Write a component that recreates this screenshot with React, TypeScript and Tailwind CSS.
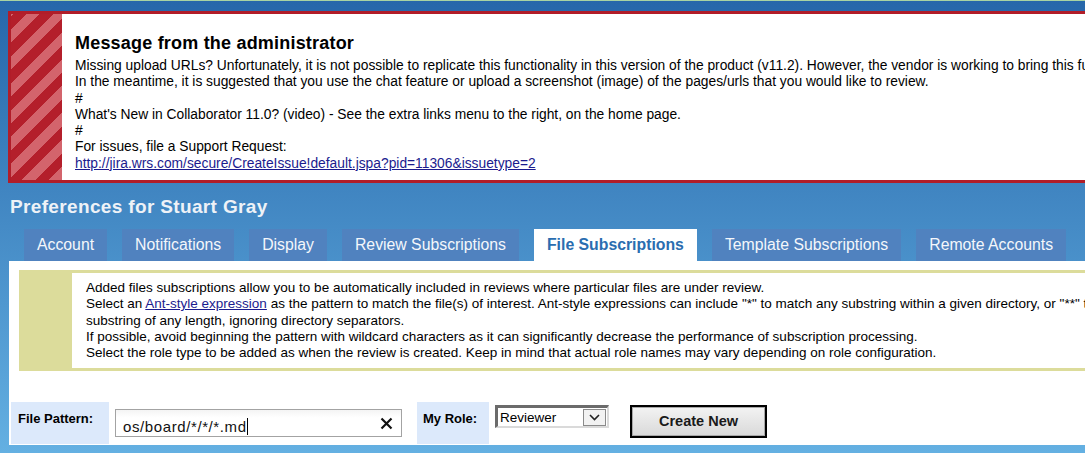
import React from "react";

const tabs = [
  "Account",
  "Notifications",
  "Display",
  "Review Subscriptions",
  "File Subscriptions",
  "Template Subscriptions",
  "Remote Accounts",
];

export default function App() {
  return (
    <div className="w-[1085px] h-[453px] overflow-hidden border-t border-[#a9d3a3] bg-gradient-to-b from-[#2767aa] to-[#64b0e2] font-['Liberation_Sans',Arial,sans-serif] text-black">
      {/* Admin message */}
      <div className="pt-[10px] pl-[8px]">
        <div className="flex h-[172px] w-[1200px] border-[3px] border-[#b11d29] bg-white">
          <div className="w-[51px] shrink-0 bg-[repeating-linear-gradient(-45deg,#d3646c_0px,#d3646c_9.5px,#b41f2b_9.5px,#b41f2b_19px)]" />
          <div className="pl-[13px] pt-[18px] text-[13.8px] leading-[16.3px] whitespace-nowrap">
            <div className="mb-[4px] text-[18px] leading-[22px] font-bold tracking-[0.2px]">
              Message from the administrator
            </div>
            <div>
              Missing upload URLs? Unfortunately, it is not possible to replicate this functionality in this version of the product (v11.2). However, the vendor is working to bring this functionality back in a future release.
            </div>
            <div>
              In the meantime, it is suggested that you use the chat feature or upload a screenshot (image) of the pages/urls that you would like to review.
            </div>
            <div>#</div>
            <div>
              What's New in Collaborator 11.0? (video) - See the extra links menu to the right, on the home page.
            </div>
            <div>#</div>
            <div>For issues, file a Support Request:</div>
            <div>
              <a className="text-[#1b1b8e] underline">
                http://jira.wrs.com/secure/CreateIssue!default.jspa?pid=11306&amp;issuetype=2
              </a>
            </div>
          </div>
        </div>
      </div>

      {/* Page title */}
      <div className="mt-[12px] pl-[10px] text-[19px] leading-[24px] font-bold text-[#eef2f7] tracking-[0.35px]">
        Preferences for Stuart Gray
      </div>

      {/* Tabs */}
      <div className="mt-[10px] flex gap-[15px] pl-[24px] h-[32px]">
        {tabs.map((t) => {
          const active = t === "File Subscriptions";
          return (
            <div
              key={t}
              className={
                active
                  ? "flex items-center px-[13px] bg-white text-[15.8px] font-bold text-[#2a6db0] whitespace-nowrap"
                  : "flex items-center px-[13px] bg-[#5082bf] text-[15.8px] text-[#f4f7fb] whitespace-nowrap"
              }
            >
              {t}
            </div>
          );
        })}
      </div>

      {/* Panel */}
      <div className="ml-[9px] h-[184px] bg-white pt-[9px]">
        {/* Info box */}
        <div className="ml-[10px] flex bg-[#dcdc9b] pt-[3px] pb-[3px]">
          <div className="w-[53px] shrink-0" />
          <div className="flex-1 bg-white pl-[14px] pt-[7px] pb-[7px] text-[13.5px] leading-[16.3px] whitespace-nowrap overflow-hidden">
            <div>
              Added files subscriptions allow you to be automatically included in reviews where particular files are under review.
            </div>
            <div>
              Select an{" "}
              <a className="text-[#1b1b8e] underline">Ant-style expression</a>{" "}
              as the pattern to match the file(s) of interest. Ant-style expressions can include "*" to match any substring within a given directory, or "**" to match any
            </div>
            <div>substring of any length, ignoring directory separators.</div>
            <div>
              If possible, avoid beginning the pattern with wildcard characters as it can significantly decrease the performance of subscription processing.
            </div>
            <div>
              Select the role type to be added as when the review is created. Keep in mind that actual role names may vary depending on role configuration.
            </div>
          </div>
        </div>

        {/* Form row */}
        <div className="mt-[31px] ml-[2px] flex h-[42px]">
          <div className="w-[98px] bg-[#dce9fb] pl-[7px] pt-[9px] text-[13px] font-bold leading-[16px]">
            File Pattern:
          </div>
          <div className="w-[308px] pl-[6px] pt-[7px]">
            <div className="relative h-[28px] w-[287px] border border-[#a3a3a3] bg-gradient-to-b from-[#f4f4f4] to-white to-[30%]">
              <span className="absolute left-[7px] top-[8px] text-[15px] leading-[18px] tracking-[0.6px] text-[#111]">
                os/board/*/*/*.md
                <span className="inline-block w-[1px] h-[17px] bg-black align-[-3px]" />
              </span>
              <svg
                className="absolute right-[8px] top-[7px]"
                width="13"
                height="13"
                viewBox="0 0 13 13"
              >
                <path d="M1.5 1.5 L11.5 11.5 M11.5 1.5 L1.5 11.5" stroke="#111" strokeWidth="2.2" />
              </svg>
            </div>
          </div>
          <div className="w-[72px] bg-[#dce9fb] pl-[6px] pt-[9px] text-[13px] font-bold leading-[16px]">
            My Role:
          </div>
          <div className="pl-[6px] pt-[3px]">
            <div className="flex h-[23px] w-[114px] items-center border-t-[3px] border-l-[3px] border-r-[2px] border-b-[2px] border-t-[#6b6b6b] border-l-[#6b6b6b] border-r-[#dadada] border-b-[#dadada] bg-white">
              <span className="flex-1 pl-[2px] pt-[1px] text-[13.5px] leading-[16px]">Reviewer</span>
              <div className="mr-[1px] flex h-[17px] w-[23px] items-center justify-center border border-[#8a8a8a] bg-[#f2f2f2]">
                <svg width="11" height="7" viewBox="0 0 11 7">
                  <path d="M1 1 L5.5 5.5 L10 1" fill="none" stroke="#222" strokeWidth="1.6" />
                </svg>
              </div>
            </div>
          </div>
          <div className="pl-[21px] pt-[3px]">
            <div className="flex h-[33px] w-[137px] items-center justify-center border-2 border-black bg-gradient-to-b from-[#f3f3f3] to-[#d9d9d9] shadow-[inset_0_0_0_1px_#a8a8a8] text-[14.5px] font-bold text-[#1a1a1a]">
              Create New
            </div>
          </div>
        </div>
      </div>
    </div>
  );
}
